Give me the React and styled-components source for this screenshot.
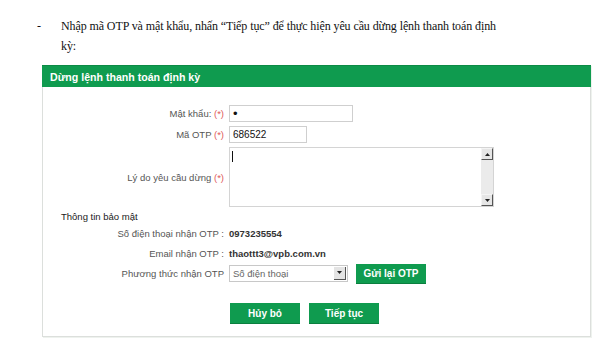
import React from 'react';
import styled, { createGlobalStyle } from 'styled-components';

const GlobalStyle = createGlobalStyle`
  html, body {
    margin: 0;
    padding: 0;
    background: #ffffff;
  }
`;

const Page = styled.div`
  width: 598px;
  padding-top: 16px;
`;

const Instruction = styled.div`
  display: flex;
  padding-left: 37px;
  font-family: "Liberation Serif", "Times New Roman", serif;
  font-size: 12px;
  letter-spacing: -0.1px;
  line-height: 20px;
  color: #111;
`;

const Dash = styled.span`
  width: 24px;
  flex: none;
`;

const InstructionText = styled.p`
  margin: 0;
  width: 445px;
`;

const Panel = styled.div`
  margin: 9px 0 0 42px;
  width: 547px;
  border: 1px solid #dcdfdc;
  box-shadow: 1px 1px 0 #eef2ee;
  font-family: "Liberation Sans", Arial, sans-serif;
  font-size: 9.5px;
  color: #555;
`;

const PanelHeader = styled.div`
  height: 22px;
  line-height: 22px;
  background: #0f9b4f;
  border-top: 1px solid #0c8a45;
  box-sizing: border-box;
  padding-left: 8px;
  color: #ffffff;
  font-weight: bold;
  font-size: 10.6px;
  margin: -1px -1px 0 -1px;
`;

const PanelBody = styled.div`
  padding: 18px 0 13px 0;
`;

const FormGrid = styled.div`
  display: grid;
  grid-template-columns: 181px 1fr;
  column-gap: 5px;
  row-gap: ${p => p.$gap ?? 4}px;
  align-items: center;
`;

const Label = styled.label`
  display: block;
  width: 100%;
  text-align: right;
  color: #555;
  white-space: nowrap;
`;

const Req = styled.span`
  color: #e05a5a;
`;

const TextInput = styled.input`
  width: ${p => p.$w}px;
  height: 17px;
  box-sizing: border-box;
  border: 1px solid #cfcfcf;
  padding: 0 3px;
  font-family: "Liberation Sans", Arial, sans-serif;
  font-size: ${p => p.$fs || 10}px;
  color: #111;
  outline: none;
  margin: 0;
`;

const AreaBox = styled.div`
  display: flex;
  width: 265px;
  height: 60px;
  box-sizing: border-box;
  border: 1px solid #d4d4d4;
`;

const Caret = styled.span`
  display: block;
  width: 1px;
  height: 11px;
  background: #111;
  margin: 3px 0 0 2px;
`;

const AreaInner = styled.div`
  flex: 1;
  display: flex;
  flex-direction: column;
`;

const ScrollTrack = styled.div`
  width: 12px;
  display: flex;
  flex-direction: column;
  justify-content: space-between;
  background: #ebebeb;
`;

const ScrollBtn = styled.div`
  width: 12px;
  height: 12px;
  box-sizing: border-box;
  background: #e6e6e6;
  border-top: 1px solid #f4f4f4;
  border-left: 1px solid #f4f4f4;
  border-right: 1px solid #555;
  border-bottom: 1px solid #555;
  display: flex;
  align-items: center;
  justify-content: center;
`;

const SectionTitle = styled.div`
  margin: 3px 0 0 18px;
  color: #1a1a1a;
  height: 13px;
  line-height: 13px;
`;

const Value = styled.span`
  color: #333;
  font-weight: bold;
`;

const InfoRow = styled.div`
  height: 20px;
  display: flex;
  align-items: center;
`;

const SelectBox = styled.div`
  width: 119px;
  height: 17px;
  box-sizing: border-box;
  border: 1px solid #c8c8c8;
  display: flex;
  align-items: stretch;
  color: #666;
`;

const SelectValue = styled.span`
  flex: 1;
  padding-left: 3px;
  line-height: 15px;
`;

const SelectArrow = styled.span`
  width: 11px;
  margin: 1px;
  background: #e4e4e4;
  border-right: 1px solid #555;
  border-bottom: 1px solid #555;
  display: flex;
  align-items: center;
  justify-content: center;
`;

const Button = styled.button`
  width: 70px;
  height: ${p => p.$h || 20}px;
  border: none;
  background: #0f9b4f;
  color: #ffffff;
  font-family: "Liberation Sans", Arial, sans-serif;
  font-size: 10px;
  font-weight: bold;
  padding: 0;
  margin: 0;
  box-shadow: 0 1px 0 #0b7f3f;
  cursor: pointer;
`;

const InlineGroup = styled.div`
  display: flex;
  align-items: center;
  gap: ${p => p.$gap || 8}px;
`;

const Actions = styled.div`
  display: flex;
  gap: 9px;
  margin: 20px 0 0 187px;
`;

const Footnote = styled.p`
  margin: 18px 0 0 62px;
  font-family: "Liberation Serif", "Times New Roman", serif;
  font-size: 12px;
  line-height: 20px;
  color: #111;
  white-space: nowrap;
`;

const Tri = ({ up }) => (
  <svg width="5" height="3" viewBox="0 0 5 3">
    <path d={up ? 'M0 3 L2.5 0 L5 3 Z' : 'M0 0 L2.5 3 L5 0 Z'} fill="#222" />
  </svg>
);

export default function App() {
  return (
    <Page>
      <GlobalStyle />
      <Instruction>
        <Dash>-</Dash>
        <InstructionText>
          Nhập mã OTP và mật khẩu, nhấn “Tiếp tục” để thực hiện yêu cầu dừng lệnh thanh toán định kỳ:
        </InstructionText>
      </Instruction>

      <Panel>
        <PanelHeader>Dừng lệnh thanh toán định kỳ</PanelHeader>
        <PanelBody>
          <FormGrid>
            <Label>Mật khẩu: <Req>(*)</Req></Label>
            <TextInput type="password" $w={124} $fs={13} defaultValue="1" />
            <Label>Mã OTP <Req>(*)</Req></Label>
            <TextInput type="text" $w={78} defaultValue="686522" />
            <Label>Lý do yêu cầu dừng <Req>(*)</Req></Label>
            <AreaBox>
              <AreaInner>
                <Caret />
              </AreaInner>
              <ScrollTrack>
                <ScrollBtn><Tri up /></ScrollBtn>
                <ScrollBtn><Tri /></ScrollBtn>
              </ScrollTrack>
            </AreaBox>
          </FormGrid>

          <SectionTitle>Thông tin bảo mật</SectionTitle>

          <FormGrid $gap={0}>
            <InfoRow><Label as="span">Số điện thoại nhận OTP :</Label></InfoRow>
            <InfoRow><Value>0973235554</Value></InfoRow>
            <InfoRow><Label as="span">Email nhận OTP :</Label></InfoRow>
            <InfoRow><Value>thaottt3@vpb.com.vn</Value></InfoRow>
            <InfoRow><Label as="span">Phương thức nhận OTP</Label></InfoRow>
            <InfoRow>
              <InlineGroup $gap={8}>
                <SelectBox>
                  <SelectValue>Số điện thoại</SelectValue>
                  <SelectArrow><Tri /></SelectArrow>
                </SelectBox>
                <Button $h={19}>Gửi lại OTP</Button>
              </InlineGroup>
            </InfoRow>
          </FormGrid>

          <Actions>
            <Button>Hủy bỏ</Button>
            <Button>Tiếp tục</Button>
          </Actions>
        </PanelBody>
      </Panel>

      <Footnote>
        Nếu khách hàng không nhận được mã OTP, khách hàng có thể chọn gửi lại mã OTP để nhận mã mới.
      </Footnote>
    </Page>
  );
}
